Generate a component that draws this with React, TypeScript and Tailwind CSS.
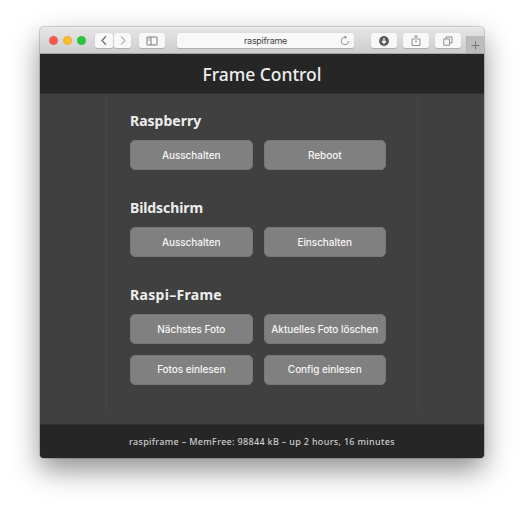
import type { ReactNode } from "react";

function ToolButton({ className = "", children }: { className?: string; children?: ReactNode }) {
  return (
    <div
      className={`flex h-[15px] shrink-0 items-center justify-center rounded-[2.5px] bg-[#f8f8f8] shadow-[0_0.5px_1px_rgba(0,0,0,0.18)] ${className}`}
    >
      {children}
    </div>
  );
}

function Toolbar() {
  return (
    <div className="flex h-[27px] shrink-0 rounded-t-[4px] border-b border-[#a5a5a5] bg-linear-to-b from-[#e6e6e6] to-[#cecece] pl-[9px] pt-[6px] shadow-[inset_0_1px_0_#eeeeee]">
      <div className="mt-[3px] flex gap-[5px]">
        <span className="size-[9px] rounded-full border border-[#f0534c] bg-[#fc5b54]" />
        <span className="size-[9px] rounded-full border border-[#edac27] bg-[#fdbc2e]" />
        <span className="size-[9px] rounded-full border border-[#24b834] bg-[#27c93f]" />
      </div>
      <ToolButton className="ml-[9px] w-[18px]">
        <svg width="8" height="11" viewBox="0 0 8 11" fill="none" stroke="#707070" strokeWidth="1.3"><path d="M6 1.3 2 5.5 6 9.7" /></svg>
      </ToolButton>
      <ToolButton className="ml-px w-[17px]">
        <svg width="8" height="11" viewBox="0 0 8 11" fill="none" stroke="#b4b4b4" strokeWidth="1.2"><path d="M2 1.3 6 5.5 2 9.7" /></svg>
      </ToolButton>
      <ToolButton className="ml-[8px] w-[26px]">
        <svg width="12" height="10" viewBox="0 0 12 10" fill="none" stroke="#777777"><rect x="1" y="1" width="10" height="8" rx=".5" /><path d="M5 1v8" /><path d="M2.3 2.7h1.4M2.3 4.2h1.4" strokeWidth=".7" /></svg>
      </ToolButton>
      <div className="ml-[12px] grid h-[15px] w-[177px] shrink-0 grid-cols-[14px_1fr_14px] items-center rounded-[2.5px] bg-[#f8f8f8] shadow-[0_0.5px_1px_rgba(0,0,0,0.18)]">
        <span />
        <span className="text-center font-['Inter','Liberation_Sans',sans-serif] text-[9px] leading-[15px] tracking-[-0.28px] text-[#444444]">raspiframe</span>
        <svg width="10" height="11" viewBox="0 0 10 11" fill="none" stroke="#8b8b8b" strokeWidth=".9"><path d="M5.8 2.3H4.8A3.7 3.7 0 1 0 8.6 6" /><path d="M4.7.6 7 2.3 4.7 4z" fill="#8b8b8b" stroke="none" /></svg>
      </div>
      <ToolButton className="ml-[17px] w-[26px]">
        <svg width="10" height="10" viewBox="0 0 10 10"><circle cx="5" cy="5" r="4.9" fill="#585858" /><path d="M5 2v5M3 5l2 2.2L7 5" fill="none" stroke="#f8f8f8" strokeWidth="1.3" /></svg>
      </ToolButton>
      <ToolButton className="ml-[6px] w-[26px]">
        <svg width="10" height="12" viewBox="0 0 10 12" fill="none" stroke="#858585" strokeWidth=".9"><path d="M3.5 4H1v6.5h8V4H6.5" /><path d="M5 7.5V.8M3 2.5 5 .6l2 1.9" /></svg>
      </ToolButton>
      <ToolButton className="ml-[6px] w-[26px]">
        <svg width="10" height="10" viewBox="0 0 10 10" fill="none" stroke="#858585" strokeWidth=".9"><rect x=".8" y="3" width="5.7" height="6.2" /><path d="M3 3V.9h6V7H6.5" /></svg>
      </ToolButton>
      <div className="ml-auto mt-[3px] flex h-[17px] w-[18px] items-center justify-center border-l border-[#b1b1b1] bg-[#bcbcbc] pt-px">
        <svg width="9" height="9" viewBox="0 0 9 9" stroke="#777777"><path d="M4.5.5v8M.5 4.5h8" /></svg>
      </div>
    </div>
  );
}

function ControlButton({ children }: { children: ReactNode }) {
  return (
    <button className="h-[30px] whitespace-nowrap rounded-[5px] border border-[#777777] bg-[#808080] pb-px text-center font-['Inter','Liberation_Sans',sans-serif] text-[10px] font-medium leading-none tracking-[-0.06px] text-[#f6f6f6]">
      {children}
    </button>
  );
}

function Section({ title, titleClass = "", children }: { title: string; titleClass?: string; children: ReactNode }) {
  return (
    <section>
      <h2 className={`h-[20px] whitespace-nowrap font-['Noto_Sans',sans-serif] text-[14px] font-bold leading-[17px] text-[#eeeeee] ${titleClass}`}>{title}</h2>
      <div className="mt-[8px] grid grid-cols-[122.5px_122.5px] gap-x-[11px] gap-y-[10.5px]">{children}</div>
    </section>
  );
}

export default function App() {
  return (
    <div className="h-[511px] w-[524px] overflow-hidden bg-white pl-[40px] pt-[27px]">
      <div className="flex h-[431px] w-[444px] flex-col rounded-[4px] bg-[#404040] shadow-[0_0_0_1px_rgba(0,0,0,0.16),0_12px_28px_rgba(0,0,0,0.44)]">
        <Toolbar />
        <header className="flex h-[40px] shrink-0 items-center justify-center border-b border-[#303030] bg-[#262626]">
          <h1 className="whitespace-nowrap font-['Noto_Sans',sans-serif] text-[17.5px] font-medium leading-[40px] tracking-[-0.05px] text-[#eeeeee]">Frame Control</h1>
        </header>
        <main className="flex h-[330px] shrink-0 justify-center">
          <div className="flex h-[318px] w-[312px] flex-col gap-[29px] border-x border-[#484848] pl-[23px] pt-[18px]">
            <Section title="Raspberry">
              <ControlButton>Ausschalten</ControlButton>
              <ControlButton>Reboot</ControlButton>
            </Section>
            <Section title="Bildschirm" titleClass="tracking-[-0.1px]">
              <ControlButton>Ausschalten</ControlButton>
              <ControlButton>Einschalten</ControlButton>
            </Section>
            <Section title="Raspi–Frame" titleClass="tracking-[0.3px]">
              <ControlButton>Nächstes Foto</ControlButton>
              <ControlButton>Aktuelles Foto löschen</ControlButton>
              <ControlButton>Fotos einlesen</ControlButton>
              <ControlButton>Config einlesen</ControlButton>
            </Section>
          </div>
        </main>
        <footer className="flex h-[34px] shrink-0 items-center justify-center whitespace-nowrap rounded-b-[4px] border-t border-[#303030] bg-[#262626] font-['Noto_Sans',sans-serif] text-[9px] font-medium leading-none tracking-[0.32px] text-[#cccccc]">
          raspiframe – MemFree: 98844 kB – up 2 hours, 16 minutes
        </footer>
      </div>
    </div>
  );
}
